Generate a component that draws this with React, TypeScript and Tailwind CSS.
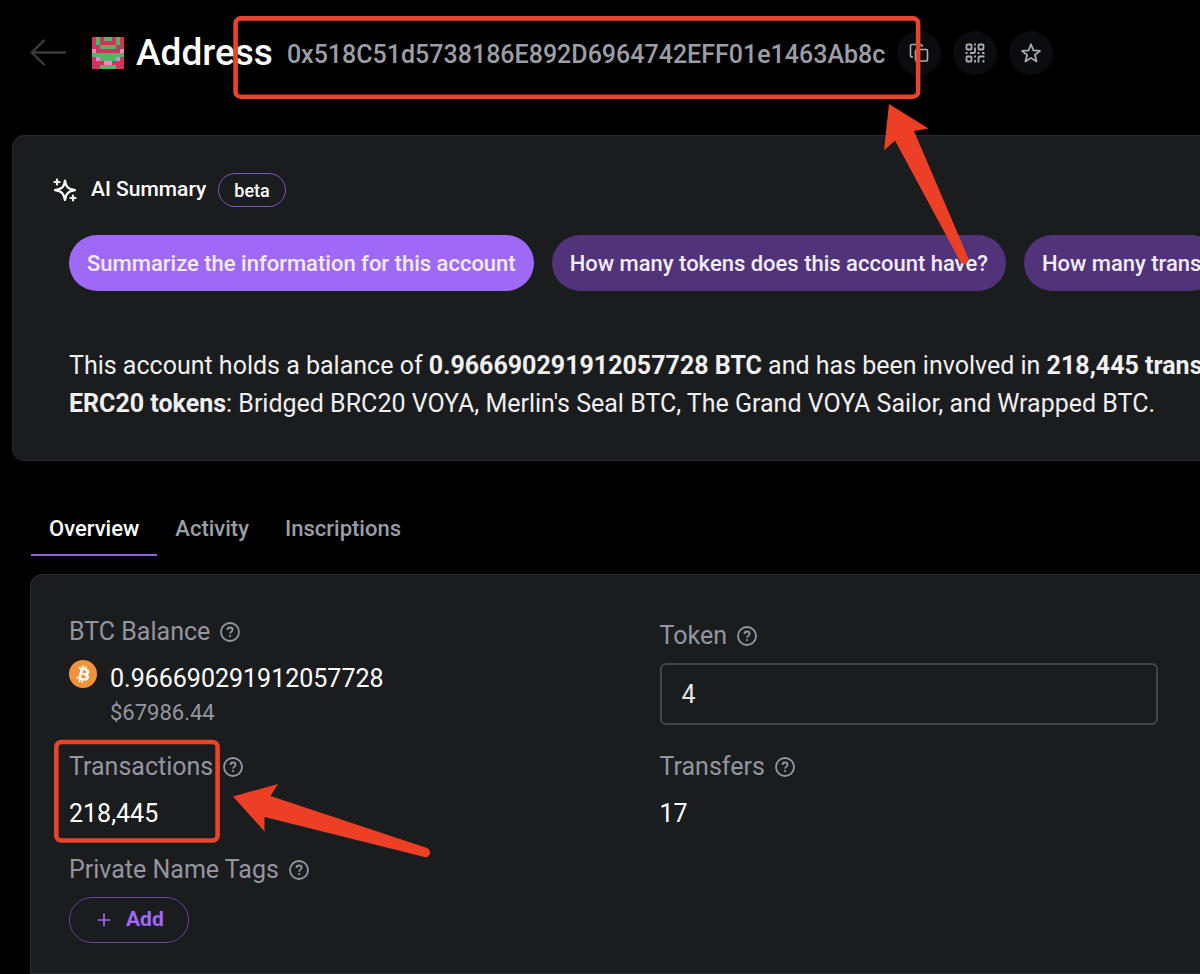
import type { ComponentPropsWithoutRef, FC, ReactNode } from "react";
import { Plus } from "lucide-react";

// r = red, g = green, p = pink
const identicon = [
  "rgrggrgr",
  "rgrrrrgr",
  "rrggggrr",
  "prrrrrrp",
  "gggggggg",
  "rpggggpr",
  "rrrpprrr",
  "rrggggrr",
];

const identiconColors: Record<string, string> = {
  r: "#d6315f",
  g: "#56b562",
  p: "#e68bc8",
};

const questions = [
  { label: "Summarize the information for this account", active: true },
  { label: "How many tokens does this account have?", active: false },
  { label: "How many trans", active: false },
];

const tabs = ["Overview", "Activity", "Inscriptions"];

const Identicon: FC = () => (
  <svg
    className="size-8 shrink-0"
    viewBox="0 0 8 8"
    shapeRendering="crispEdges"
    aria-hidden
  >
    {identicon.map((row, y) =>
      row
        .split("")
        .map((cell, x) => (
          <rect
            key={`${x}-${y}`}
            x={x}
            y={y}
            width={1}
            height={1}
            fill={identiconColors[cell]}
          />
        ))
    )}
  </svg>
);

const HelpIcon: FC = () => (
  <svg
    className="size-5 shrink-0"
    viewBox="0 0 20 20"
    fill="none"
    stroke="currentColor"
    strokeWidth={1.8}
    aria-hidden
  >
    <circle cx={10} cy={10} r={9} />
    <path d="M7.4 7.9C7.5 6.4 8.6 5.5 10 5.5s2.6 1 2.6 2.3c0 1.7-2.5 1.9-2.5 4" />
    <circle cx={10.1} cy={14.1} r={1.1} fill="currentColor" stroke="none" />
  </svg>
);

const BitcoinIcon: FC = () => (
  <svg className="size-7 shrink-0" viewBox="0 0 32 32" aria-hidden>
    <circle cx={16} cy={16} r={16} fill="#ee9339" />
    <path
      fill="#fff"
      d="M23.189 14.02c.314-2.096-1.283-3.223-3.465-3.975l.708-2.84-1.728-.43-.69 2.765c-.454-.114-.92-.22-1.385-.326l.695-2.783L15.596 6l-.708 2.839c-.376-.086-.746-.17-1.104-.26l.002-.009-2.384-.595-.46 1.846s1.283.294 1.256.312c.7.175.826.638.805 1.006l-.806 3.235c.048.012.11.03.18.057l-.183-.045-1.13 4.532c-.086.212-.303.531-.793.41.018.025-1.256-.313-1.256-.313l-.858 1.978 2.25.561c.418.105.828.215 1.231.318l-.715 2.872 1.727.43.708-2.84c.472.127.93.245 1.378.357l-.706 2.828 1.728.43.715-2.866c2.948.558 5.164.333 6.097-2.333.752-2.146-.037-3.385-1.588-4.192 1.13-.26 1.98-1.003 2.207-2.538zm-3.95 5.538c-.533 2.147-4.148.986-5.32.695l.95-3.805c1.172.293 4.929.872 4.37 3.11zm.535-5.569c-.487 1.953-3.495.96-4.47.717l.86-3.45c.975.243 4.118.696 3.61 2.733z"
    />
  </svg>
);

const SparkleIcon: FC = () => (
  <svg
    className="size-6 shrink-0"
    viewBox="0 0 24 24"
    fill="none"
    stroke="currentColor"
    strokeWidth={2.2}
    strokeLinecap="round"
    strokeLinejoin="round"
    aria-hidden
  >
    <path d="M12 2.5C12.8 8.6 14.6 11 22 12.2 14.8 13.4 12.9 15.6 12 22 11 15.6 9.2 13.4 2 12.2 9.4 11 11.2 8.6 12 2.5Z" />
    <path d="M4 1.500v5M1.500 4h5M20 17.500v5M17.500 20h5" />
  </svg>
);

interface IconButtonProps extends ComponentPropsWithoutRef<"button"> {}

const IconButton: FC<IconButtonProps> = ({ children, ...props }) => (
  <button
    type="button"
    className="flex size-11 shrink-0 items-center justify-center rounded-full bg-[#0b0c0e] text-[#a9adb5]"
    {...props}
  >
    {children}
  </button>
);

const Label: FC<{ children: ReactNode; htmlFor?: string }> = ({
  children,
  htmlFor,
}) => (
  <div className="flex h-[38px] items-center gap-[10px] text-[25px] text-[#9396a0]">
    {htmlFor ? <label htmlFor={htmlFor}>{children}</label> : children}
    <HelpIcon />
  </div>
);

const Header: FC = () => (
  <header className="flex h-[106px] items-center pl-[30px] whitespace-nowrap">
    <a href="#" aria-label="Back" className="text-[#3c3c3c]">
      <svg
        className="h-7 w-9"
        viewBox="0 0 36 28"
        fill="none"
        stroke="currentColor"
        strokeWidth={2.4}
        strokeLinecap="round"
        strokeLinejoin="round"
      >
        <path d="M35 13.5H2M14 1.5 1.8 13.5 14 25.5" />
      </svg>
    </a>
    <div className="ml-[26px] flex items-center gap-3">
      <Identicon />
      <h1 className="text-[37px] font-medium">Address</h1>
    </div>
    <span className="ml-[14px] pt-1 text-[25px] font-medium text-[#9b9ea6]">
      0x518C51d5738186E892D6964742EFF01e1463Ab8c
    </span>
    <div className="ml-3 flex gap-3">
      <IconButton aria-label="Copy address">
        <svg
          className="size-5"
          viewBox="0 0 20 20"
          fill="none"
          stroke="currentColor"
          strokeWidth={1.6}
          strokeLinejoin="round"
        >
          <rect x={6.5} y={6.5} width={12} height={11.5} rx={1.5} />
          <path d="M4 14H3a1.5 1.5 0 0 1-1.500-1.500V3A1.500 1.500 0 0 1 3 1.500h8.500A1.500 1.500 0 0 1 13 3v1" />
        </svg>
      </IconButton>
      <IconButton aria-label="Show QR code">
        <svg
          className="size-5"
          viewBox="0 0 20 20"
          fill="none"
          stroke="currentColor"
          strokeWidth={1.8}
        >
          <rect x={1.5} y={1.5} width={5} height={5} rx={1} />
          <rect x={13.5} y={1.5} width={5} height={5} rx={1} />
          <rect x={1.5} y={13.5} width={5} height={5} rx={1} />
          <path d="M10 .5v2M10 4.5v4a1.5 1.5 0 0 1-1.5 1.5H5M.5 10h2M12.5 10h2M17 10h2.5M10 12.5v2M10 17v2.5M13.5 19.5v-4.5a1.5 1.5 0 0 1 1.5-1.5h4.500M18.5 17v2.5" />
        </svg>
      </IconButton>
      <IconButton aria-label="Add to watch list">
        <svg
          className="size-5"
          viewBox="0 0 20 20"
          fill="none"
          stroke="currentColor"
          strokeWidth={1.7}
          strokeLinejoin="round"
        >
          <path d="M10 1.2 12.4 7.4 19 7.8 13.9 12 15.6 18.5 10 14.9 4.4 18.5 6.1 12 1 7.8 7.6 7.4Z" />
        </svg>
      </IconButton>
    </div>
  </header>
);

const Summary: FC = () => (
  <section className="-mr-5 ml-3 mt-[29px] rounded-xl border border-[#272a2f] bg-[#1b1c1e] pt-[37px] pb-[37px] pl-10 whitespace-nowrap">
    <div className="flex items-center">
      <SparkleIcon />
      <h2 className="ml-[14px] text-[21px] font-medium">AI Summary</h2>
      <span className="ml-3 flex h-[34px] items-center rounded-full border border-[#7d55c4] px-[15px] text-[18px] font-medium">
        beta
      </span>
    </div>
    <div className="mt-7 ml-4 flex gap-[18px]">
      {questions.map(({ label, active }) => (
        <button
          key={label}
          type="button"
          className={
            active
              ? "h-14 shrink-0 rounded-full bg-[#9f69f7] px-[18px] text-[22px] font-medium text-[#f3ecff]"
              : "h-14 shrink-0 rounded-full bg-[#51337a] px-[18px] text-[22px] font-medium text-[#f3ecff]"
          }
        >
          {label}
        </button>
      ))}
    </div>
    <p className="mt-14 ml-4 text-[25px] leading-[38px] text-[#f0f0f1]">
      This account holds a balance of <b>0.966690291912057728 BTC</b> and has
      been involved in <b>218,445 trans</b>
      <br />
      <b>ERC20 tokens</b>: Bridged BRC20 VOYA, Merlin&apos;s Seal BTC, The Grand
      VOYA Sailor, and Wrapped BTC.
    </p>
  </section>
);

const Overview: FC = () => (
  <section className="-mr-5 ml-[30px] mt-[18px] grid flex-1 grid-cols-2 content-start gap-x-[92px] gap-y-5 rounded-tl-xl border border-[#272a2f] bg-[#1b1c1e] pt-[38px] pr-[61px] pb-[30px] pl-[38px] text-[25px]">
    <div>
      <Label>BTC Balance</Label>
      <div className="mt-[9px] flex items-start gap-[13px]">
        <BitcoinIcon />
        <div>
          <div className="leading-[38px]">0.966690291912057728</div>
          <div className="text-[22px] leading-[30px] text-[#9396a0]">
            $67986.44
          </div>
        </div>
      </div>
    </div>
    <div className="pt-1">
      <Label htmlFor="token">Token</Label>
      <input
        id="token"
        type="text"
        defaultValue="4"
        className="mt-2 block h-[62px] w-full rounded-md border-2 border-[#434446] px-5 text-[#e4e4e5] outline-none"
      />
    </div>
    <div>
      <Label>Transactions</Label>
      <div className="mt-[11px] leading-[34px]">218,445</div>
    </div>
    <div>
      <Label>Transfers</Label>
      <div className="mt-[11px] leading-[34px]">17</div>
    </div>
    <div>
      <Label>Private Name Tags</Label>
      <button
        type="button"
        className="mt-2 flex h-[46px] items-center gap-3 rounded-full border border-[#654699] px-6 text-[21px] font-bold text-[#9f69f7]"
      >
        <Plus className="size-5" strokeWidth={2} />
        Add
      </button>
    </div>
  </section>
);

// Red boxes and arrows that call out the address and the transaction count
const Callouts: FC = () => (
  <svg
    className="pointer-events-none absolute top-0 left-0 h-[974px] w-[1200px] max-w-none"
    viewBox="0 0 1200 974"
    aria-hidden
  >
    <g fill="none" stroke="#e8432b" strokeWidth={4.6}>
      <rect x={235.6} y={18.4} width={682.5} height={78.3} rx={5} />
      <rect x={56.3} y={742} width={161.3} height={98.5} rx={5} />
    </g>
    <g fill="#ec3f25">
      <path d="M889 104 928.5 128.5 914 131 968 257.5Q969.5 262 965.5 264 962 265 960 261L895 140.5 884 150.5Z" />
      <path d="M233 796.5 278 784 270.5 796 427 848Q431 850 430 853.5 428.5 858 424.5 857L264.5 817V831.5Z" />
    </g>
  </svg>
);

export default function App() {
  return (
    <main className="relative flex min-h-screen flex-col overflow-hidden bg-black font-[Roboto,'Liberation_Sans',sans-serif] text-white">
      <Header />
      <Summary />
      <nav className="mt-[42px] ml-[31px] flex text-[22px] font-medium">
        {tabs.map((tab, i) => (
          <button
            key={tab}
            type="button"
            className={
              i === 0
                ? "h-[53px] border-b-2 border-[#8f62dc] px-[18px]"
                : "h-[53px] border-b-2 border-transparent px-[18px] text-[#9b9ea6]"
            }
          >
            {tab}
          </button>
        ))}
      </nav>
      <Overview />
      <Callouts />
    </main>
  );
}
